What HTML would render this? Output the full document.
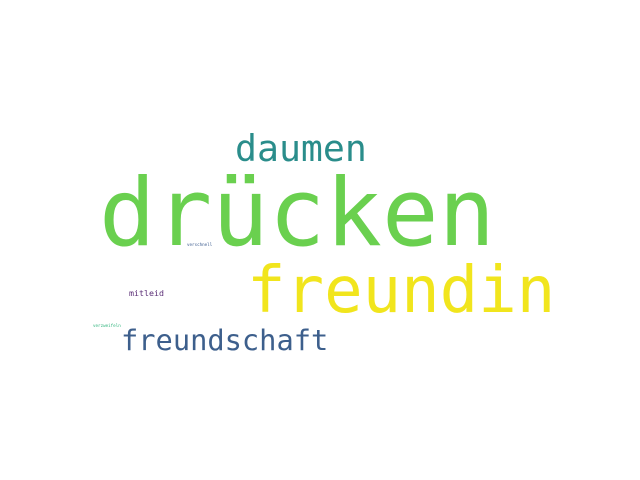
<!DOCTYPE html>
<html><head><meta charset="utf-8"><style>
html,body{margin:0;padding:0;background:#fff;width:640px;height:480px;overflow:hidden}
text{font-family:"DejaVu Sans Mono","Liberation Mono",monospace}
</style></head><body>
<svg width="640" height="480" xmlns="http://www.w3.org/2000/svg">
<text x="99" y="245" font-size="94" fill="#6ad04f">drücken</text>
<text x="247" y="312" font-size="64" fill="#f1e51d">freundin</text>
<text x="235" y="161" font-size="36.5" fill="#2a8d8b">daumen</text>
<text x="121" y="350" font-size="28.7" fill="#3d5f8c">freundschaft</text>
<text x="129" y="296" font-size="8.3" fill="#5a2d76">mitleid</text>
<text x="187" y="246" font-size="4.2" fill="#3b5b8e">verschnell</text>
<text x="93" y="327" font-size="4.2" fill="#2fb47c">verzweifeln</text>
</svg>
</body></html>
